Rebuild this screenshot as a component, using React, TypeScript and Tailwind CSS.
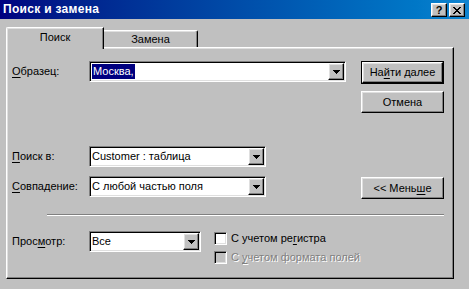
import React from "react";

const raised =
  "border border-t-white border-l-white border-r-black border-b-black shadow-[inset_-1px_-1px_#808080,inset_1px_1px_#dfdfdf]";
const sunken =
  "border border-t-[#808080] border-l-[#808080] border-r-white border-b-white shadow-[inset_1px_1px_#000,inset_-1px_-1px_#dfdfdf]";

const Arrow: React.FC = () => (
  <svg width="7" height="4" viewBox="0 0 7 4" shapeRendering="crispEdges">
    <path d="M0 0h7v1H0z M1 1h5v1H1z M2 2h3v1H2z M3 3h1v1H3z" fill="#000" />
  </svg>
);

const Combo: React.FC<{ width: string; children: React.ReactNode }> = ({
  width,
  children,
}) => (
  <div className={`${width} h-[21px] ${sunken} bg-white flex items-center p-[1px]`}>
    <div className="flex-1 flex items-center pl-[1px] overflow-hidden whitespace-nowrap">
      {children}
    </div>
    <div className={`w-[16px] h-full ${raised} bg-[#c0c0c0] flex items-center justify-center`}>
      <Arrow />
    </div>
  </div>
);

const Label: React.FC<{ children: React.ReactNode }> = ({ children }) => (
  <div className="w-[77px] h-[21px] flex items-center whitespace-nowrap">{children}</div>
);

const U: React.FC<{ children: React.ReactNode }> = ({ children }) => (
  <span className="underline underline-offset-[2px]">{children}</span>
);

const Checkbox: React.FC<{ disabled?: boolean; children: React.ReactNode }> = ({
  disabled,
  children,
}) => (
  <div className="h-[17px] flex items-center">
    <div
      className={`w-[13px] h-[13px] ${sunken} ${disabled ? "bg-[#c0c0c0]" : "bg-white"}`}
    />
    <span
      className={`ml-[4px] whitespace-nowrap ${
        disabled ? "text-[#808080] [text-shadow:1px_1px_0_#fff]" : ""
      }`}
    >
      {children}
    </span>
  </div>
);

export default function App() {
  return (
    <div className="w-[469px] h-[289px] bg-[#c0c0c0] overflow-hidden text-[11px] text-black font-['Liberation_Sans',Arial,sans-serif]">
      {/* Title bar */}
      <div className="h-[19px] flex items-start bg-gradient-to-r from-[#000080] to-[#1084d0]">
        <div className="flex-1 h-[18px] flex items-center pl-[3px] text-white font-bold text-[12px] tracking-[0.3px]">
          Поиск и замена
        </div>
        <div className="flex gap-[2px] pt-[3px] pr-[4px]">
          <div className={`w-[16px] h-[14px] ${raised} bg-[#c0c0c0] flex items-center justify-center font-bold text-[11px] leading-none`}>
            ?
          </div>
          <div className={`w-[16px] h-[14px] ${raised} bg-[#c0c0c0] flex items-center justify-center`}>
            <svg width="8" height="7" viewBox="0 0 8 7" shapeRendering="crispEdges">
              <path
                d="M0 0h2v1H0z M6 0h2v1H6z M1 1h2v1H1z M5 1h2v1H5z M2 2h4v1H2z M3 3h2v1H3z M2 4h4v1H2z M1 5h2v1H1z M5 5h2v1H5z M0 6h2v1H0z M6 6h2v1H6z"
                fill="#000"
              />
            </svg>
          </div>
        </div>
      </div>

      {/* Tabs */}
      <div className="mt-[8px] ml-[6px] h-[20px] flex items-end">
        <div className="relative z-10 w-[98px] h-[22px] -mb-[2px] bg-[#c0c0c0] border-t border-l border-r border-t-white border-l-white border-r-black rounded-tl-[2px] shadow-[inset_-1px_0_#808080,inset_1px_1px_#dfdfdf] flex items-start justify-center pt-[1px]">
          Поиск
        </div>
        <div className="w-[94px] h-[17px] bg-[#c0c0c0] border-t border-r border-t-white border-r-black rounded-tr-[2px] shadow-[inset_-1px_0_#808080,inset_0_1px_#dfdfdf] flex items-start justify-center pt-[0px]">
          Замена
        </div>
      </div>

      {/* Panel */}
      <div className={`ml-[6px] w-[448px] h-[232px] ${raised} bg-[#c0c0c0]`}>
        <div className="mt-[13px] pl-[5px] flex items-start">
          <Label>
            <U>О</U>бразец:
          </Label>
          <Combo width="w-[257px]">
            <span className="bg-[#000080] text-white px-[1px] leading-[15px]">Москва,</span>
          </Combo>
          <div className="ml-[15px] flex flex-col">
            <div className="w-[83px] h-[23px] border border-black">
              <div className={`w-full h-full ${raised} bg-[#c0c0c0] flex items-center justify-center`}>
                <span>
                  На<U>й</U>ти далее
                </span>
              </div>
            </div>
            <div className={`mt-[7px] w-[83px] h-[22px] ${raised} bg-[#c0c0c0] flex items-center justify-center`}>
              Отмена
            </div>
          </div>
        </div>

        <div className="mt-[33px] pl-[5px] flex items-start">
          <Label>
            <U>П</U>оиск в:
          </Label>
          <Combo width="w-[177px]">Customer : таблица</Combo>
        </div>

        <div className="mt-[9px] pl-[5px] flex items-start">
          <Label>
            <U>С</U>овпадение:
          </Label>
          <Combo width="w-[177px]">С любой частью поля</Combo>
          <div className={`ml-[95px] mt-[1px] w-[83px] h-[22px] ${raised} bg-[#c0c0c0] flex items-center justify-center`}>
            <span>
              &lt;&lt; Мень<U>ш</U>е
            </span>
          </div>
        </div>

        <div className="mt-[15px] ml-[40px] w-[397px] h-[2px] border-t border-b border-t-[#808080] border-b-white" />

        <div className="mt-[15px] pl-[5px] flex items-start">
          <Label>
            <span>
              Прос<U>м</U>отр:
            </span>
          </Label>
          <Combo width="w-[112px]">Все</Combo>
          <div className="ml-[13px] -mt-[1px] flex flex-col gap-[2px]">
            <Checkbox>
              С учетом ре<U>г</U>истра
            </Checkbox>
            <Checkbox disabled>
              С <U>у</U>четом формата полей
            </Checkbox>
          </div>
        </div>
      </div>
    </div>
  );
}
